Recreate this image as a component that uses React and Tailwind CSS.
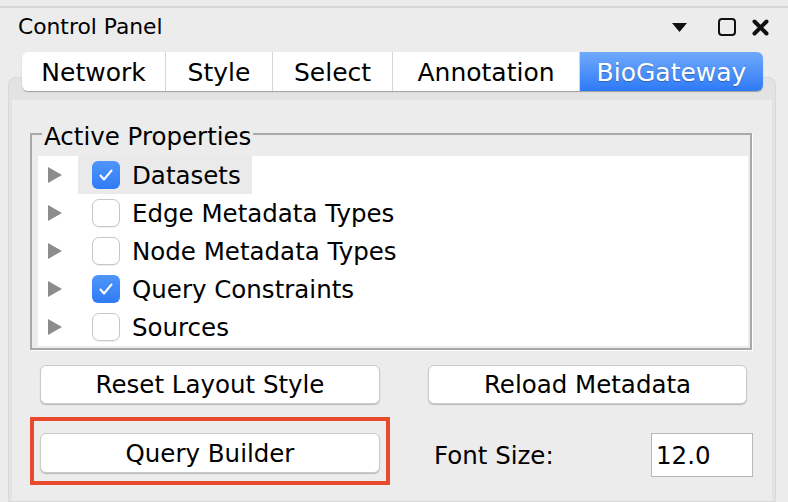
import React from 'react';

const tabs = [
    { name: 'Network', w: 'w-[144px]' },
    { name: 'Style', w: 'w-[107px]' },
    { name: 'Select', w: 'w-[120px]' },
    { name: 'Annotation', w: 'w-[187px]' },
];

const rows = [
    { label: 'Datasets', checked: true, selected: true },
    { label: 'Edge Metadata Types', checked: false },
    { label: 'Node Metadata Types', checked: false },
    { label: 'Query Constraints', checked: true },
    { label: 'Sources', checked: false },
];

function Arrow() {
    return (
        <svg width="15" height="16" viewBox="0 0 15 16" className="shrink-0">
            <polygon points="1,0 15,8 1,16" fill="#8c8c8c" />
        </svg>
    );
}

function Checkbox({ checked }) {
    if (checked) {
        return (
            <div className="w-[28px] h-[28px] shrink-0 rounded-[6px] bg-linear-to-b from-[#4f95fa] to-[#2f7bf5] flex items-center justify-center">
                <svg width="16" height="14" viewBox="0 0 16 14">
                    <path d="M2.5 7.5 L6 11.5 L13.5 2.5" fill="none" stroke="#fff" strokeWidth="2" strokeLinecap="round" strokeLinejoin="round" />
                </svg>
            </div>
        );
    }
    return <div className="w-[28px] h-[28px] shrink-0 rounded-[7px] bg-white border border-[#c6c6c6] shadow-[0_1px_0_rgba(0,0,0,0.06)]" />;
}

function Button({ children, className }) {
    return (
        <div className={"bg-white rounded-[6px] border border-[#cacaca] shadow-[0_1px_1px_rgba(0,0,0,0.22)] flex items-center justify-center text-[24.5px] text-black " + className}>
            {children}
        </div>
    );
}

export default function App() {
    return (
        <div className="w-[788px] h-[502px] bg-[#ececec] overflow-hidden flex flex-col font-['DejaVu_Sans',sans-serif] text-black">
            <div className="mt-[6px] h-[2px] bg-[#d6d6d6]" />

            {/* header */}
            <div className="h-[38px] flex items-center pl-[18px] pr-[19px]">
                <span className="text-[21.8px] leading-none">Control Panel</span>
                <svg width="15" height="9" viewBox="0 0 15 9" className="ml-auto">
                    <polygon points="0,0 15,0 7.5,9" fill="#111" />
                </svg>
                <svg width="18" height="18" viewBox="0 0 18 18" className="ml-[31px]">
                    <rect x="1" y="1" width="16" height="16" rx="3" fill="none" stroke="#111" strokeWidth="2" />
                </svg>
                <svg width="17" height="17" viewBox="0 0 17 17" className="ml-[16px]">
                    <path d="M2.5 2.5 L14.5 14.5 M14.5 2.5 L2.5 14.5" stroke="#111" strokeWidth="4" strokeLinecap="round" />
                </svg>
            </div>

            {/* tabs */}
            <div className="relative z-10 mt-[6px] ml-[22px] flex h-[39px] w-[741px] rounded-[6px] shadow-[0_1px_1px_rgba(0,0,0,0.3)]">
                {tabs.map((t, i) => (
                    <div
                        key={t.name}
                        className={"bg-white border-r border-[#d6d6d6] flex items-center justify-center pt-[2px] text-[25px] " + t.w + (i === 0 ? " rounded-l-[6px]" : "")}
                    >
                        {t.name}
                    </div>
                ))}
                <div className="w-[183px] rounded-r-[6px] bg-linear-to-b from-[#70a9fc] to-[#2c79f5] flex items-center justify-center pt-[2px] text-[25px] text-white [text-shadow:0_1px_1px_rgba(0,0,0,0.25)]">
                    BioGateway
                </div>
            </div>

            {/* tab content */}
            <div className="-mt-[14px] ml-[8px] w-[768px] flex-1 rounded-t-[8px] bg-[#e3e3e3] border border-[#dadada] px-[3px] pt-[22px] flex flex-col">
                <div className="flex-1 bg-[#ececec] flex flex-col">
                    <fieldset className="mt-[22px] ml-[18px] w-[722px] min-w-0 border-2 border-[#a8a8a8] shadow-[1px_1px_0_#fff] pt-[10px] pl-[6px] pr-[2px] pb-[2px]">
                        <legend className="ml-[4px] px-[2px] h-[24px] pt-[6px] text-[24.5px] leading-[18px]">Active Properties</legend>
                        <div className="bg-white flex flex-col">
                            {rows.map((r) => (
                                <div key={r.label} className="h-[38px] flex items-center pl-[9px]">
                                    <Arrow />
                                    <div className={"ml-[16px] h-full flex items-center gap-[12px] pl-[14px] pr-[11px] " + (r.selected ? "bg-[#eaeaea]" : "")}>
                                        <Checkbox checked={r.checked} />
                                        <span className="pt-[3px] text-[24.5px] leading-none">{r.label}</span>
                                    </div>
                                </div>
                            ))}
                        </div>
                    </fieldset>

                    <div className="mt-[15px] flex pl-[28px]">
                        <Button className="w-[340px] h-[39px] pt-[2px]">Reset Layout Style</Button>
                        <Button className="ml-[48px] w-[319px] h-[39px] pt-[2px]">Reload Metadata</Button>
                    </div>

                    <div className="mt-[13px] flex items-start pl-[18px]">
                        <div className="w-[360px] h-[68px] border-4 border-[#ea4a2c] pt-[12px] px-[6px]">
                            <Button className="w-[340px] h-[40px] pt-[2px]">Query Builder</Button>
                        </div>
                        <span className="ml-[44px] mt-[27px] text-[24.5px] leading-none">Font Size:</span>
                        <div className="ml-auto mr-[19px] mt-[16px] w-[102px] h-[44px] bg-white border border-[#b8b8b8] flex items-center pl-[4px] pt-[2px] text-[24.5px]">
                            12.0
                        </div>
                    </div>
                </div>
            </div>
        </div>
    );
}
